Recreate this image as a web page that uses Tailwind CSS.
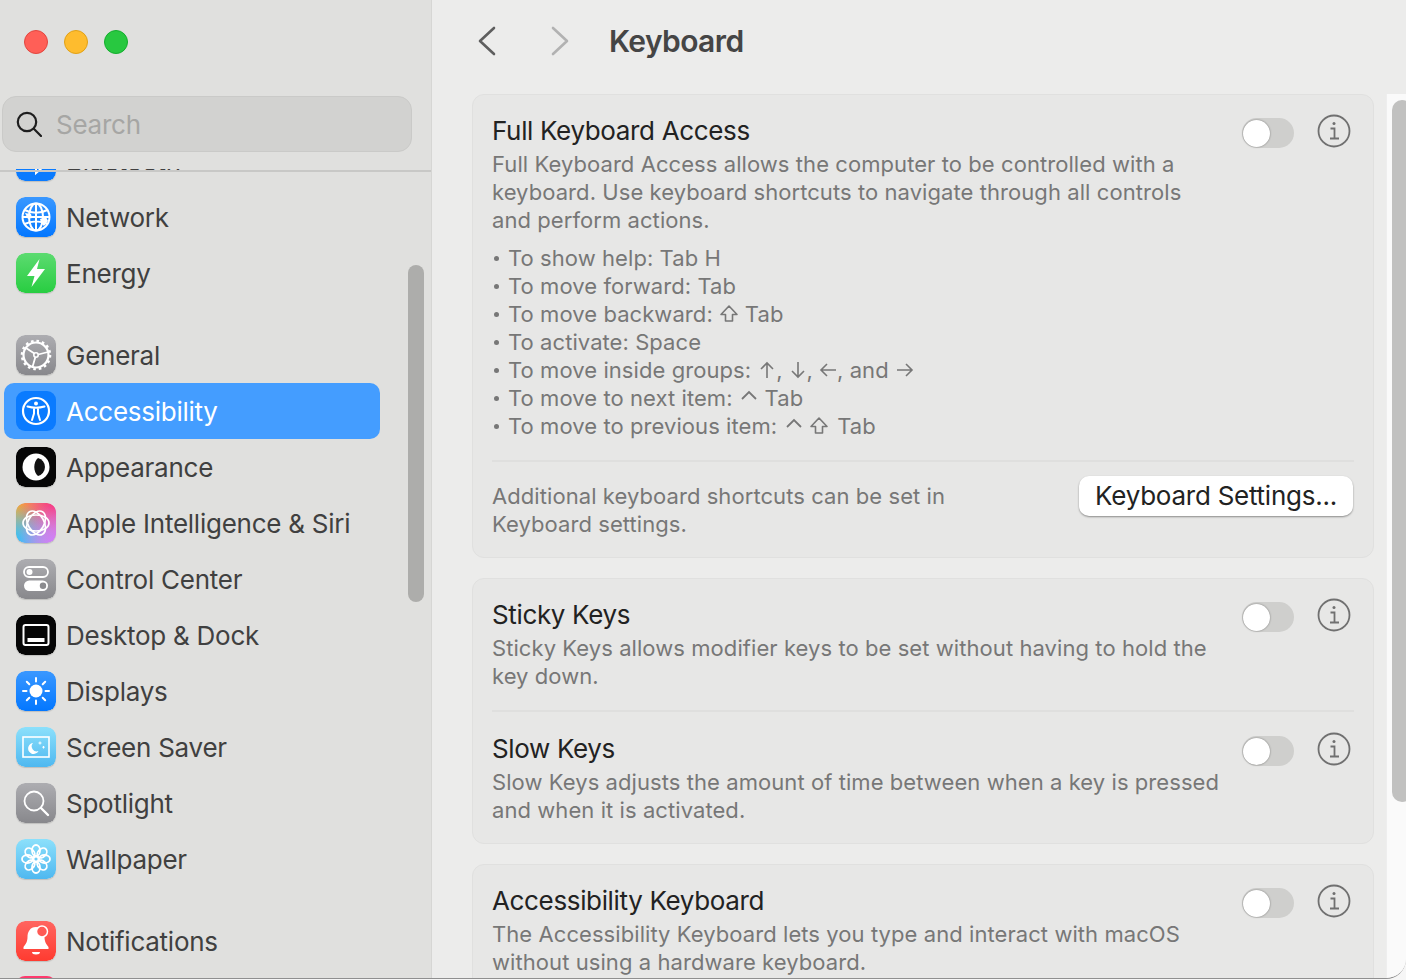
<!DOCTYPE html>
<html lang="en">
<head>
  <meta charset="UTF-8">
  <title>Keyboard</title>
  <script src="https://cdn.jsdelivr.net/npm/@tailwindcss/browser@4"></script>
</head>
<body class="h-[980px] w-[1406px] overflow-hidden bg-[#f6f6f6] font-['Inter',sans-serif]">
  <div class="flex h-[979px] overflow-hidden rounded-br-[20px] border-b border-b-[#8f8f8f] bg-[#ececeb]">

    <!-- sidebar -->
    <aside class="relative flex w-[432px] shrink-0 flex-col overflow-hidden border-r border-r-[#d6d6d4] bg-[#e0e0de]">
      <div class="relative z-10 h-[169px] shrink-0 bg-[#e0e0de]">
        <div class="flex gap-[16px] pl-[24px] pt-[30px]">
          <span class="h-[24px] w-[24px] rounded-full border border-[#e2463f] bg-[#ff5f57]"></span>
          <span class="h-[24px] w-[24px] rounded-full border border-[#e1a116] bg-[#febc2e]"></span>
          <span class="h-[24px] w-[24px] rounded-full border border-[#14ae2e] bg-[#28c840]"></span>
        </div>
        <div class="ml-[2px] mt-[42px] flex h-[56px] w-[410px] items-center rounded-[14px] border border-[#cacac8] bg-[#d2d2d0] pl-[13px]">
          <svg class="h-[26px] w-[26px]" viewBox="0 0 26 26" fill="none" stroke="#1e1e1e" stroke-width="2.2" stroke-linecap="round"><circle cx="11" cy="11" r="9.2"/><path d="M17.8 17.8 25 25"/></svg>
          <span class="ml-[14px] text-[26px] tracking-[-0.25px] text-[#a6a6a4]">Search</span>
        </div>
      </div>
      <div class="absolute left-0 top-[170px] z-20 h-[2px] w-full bg-[#c8c8c6]"></div>

      <nav class="-mt-[36px] flex flex-col text-[26px] tracking-[-0.25px] text-[#404040]">
        <a class="flex h-[56px] items-center gap-[10px] pl-[16px]">
          <svg class="h-[40px] w-[40px] rounded-[9px] shadow-[0_1px_1px_rgba(0,0,0,0.15)]" viewBox="0 0 40 40"><rect width="40" height="40" rx="9" fill="#0a7bff"/><path d="M13 14l14 12-7 6V8l7 6-14 12" fill="none" stroke="#fff" stroke-width="2"/></svg>Bluetooth
        </a>
        <a class="flex h-[56px] items-center gap-[10px] pl-[16px]">
          <svg class="h-[40px] w-[40px] rounded-[9px] shadow-[0_1px_1px_rgba(0,0,0,0.15)]" viewBox="0 0 40 40"><defs><linearGradient id="blue" x1="0" y1="0" x2="0" y2="1"><stop offset="0" stop-color="#3a98ff"/><stop offset="1" stop-color="#0377ff"/></linearGradient></defs><rect width="40" height="40" rx="9" fill="url(#blue)"/><g fill="none" stroke="#fff" stroke-width="2"><circle cx="20" cy="20" r="13.500"/><ellipse cx="20" cy="20" rx="7" ry="13.500"/><path d="M20 6.500v27M8.500 13c7 3.500 16 3.500 23 0M8.500 27c7-3.500 16-3.500 23 0M6.500 20h27"/></g><path d="M24 22l6-2 2 4-4 5-3-3zM9 16l6 1 1 4-4 1z" fill="#fff"/></svg>Network
        </a>
        <a class="flex h-[56px] items-center gap-[10px] pl-[16px]">
          <svg class="h-[40px] w-[40px] rounded-[9px] shadow-[0_1px_1px_rgba(0,0,0,0.15)]" viewBox="0 0 40 40"><defs><linearGradient id="green" x1="0" y1="0" x2="0" y2="1"><stop offset="0" stop-color="#5cdb70"/><stop offset="1" stop-color="#28cd41"/></linearGradient></defs><rect width="40" height="40" rx="9" fill="url(#green)"/><path d="M23.500 6 11 23h7.500L15.500 34 29 16h-8z" fill="#fff"/></svg>Energy
        </a>

        <a class="mt-[26px] flex h-[56px] items-center gap-[10px] pl-[16px]">
          <svg class="h-[40px] w-[40px] rounded-[9px] shadow-[0_1px_1px_rgba(0,0,0,0.15)]" viewBox="0 0 40 40"><defs><linearGradient id="gray" x1="0" y1="0" x2="0" y2="1"><stop offset="0" stop-color="#adadb1"/><stop offset="1" stop-color="#88888c"/></linearGradient></defs><rect width="40" height="40" rx="9" fill="url(#gray)"/><g fill="none" stroke="#fff"><circle cx="20" cy="20" r="12.500" stroke-width="2.200"/><circle cx="20" cy="20" r="14" stroke-width="2.600" stroke-dasharray="2.600 2.900"/><circle cx="20" cy="20" r="2.200" stroke-width="1.600"/><path d="M18.400 18.500 10 13M22.200 19.500 32 17M19.300 22.200 16.500 32" stroke-width="1.800"/></g></svg>General
        </a>
        <a class="relative ml-[4px] flex h-[56px] w-[376px] items-center gap-[10px] rounded-[10px] bg-[#449dff] pl-[12px] text-white">
          <svg class="h-[40px] w-[40px]" viewBox="0 0 40 40"><rect width="40" height="40" rx="9" fill="#0a7bff"/><circle cx="20" cy="20" r="13" fill="none" stroke="#fff" stroke-width="2.200"/><circle cx="20" cy="12.600" r="2" fill="#fff"/><path d="M11.500 15.500c5.500 1.500 11.500 1.500 17 0M18 17v5.500L16 29M22 17v5.500L24 29" fill="none" stroke="#fff" stroke-width="2" stroke-linecap="round"/></svg>Accessibility
        </a>
        <a class="flex h-[56px] items-center gap-[10px] pl-[16px]">
          <svg class="h-[40px] w-[40px] rounded-[9px] shadow-[0_1px_1px_rgba(0,0,0,0.15)]" viewBox="0 0 40 40"><rect width="40" height="40" rx="9" fill="#060606"/><circle cx="20" cy="20" r="13.500" fill="#fff"/><path d="M22 11A9.300 9.300 0 0 1 22 29C17 25 17 15 22 11z" fill="#111"/></svg>Appearance
        </a>
        <a class="flex h-[56px] items-center gap-[10px] pl-[16px]">
          <svg class="h-[40px] w-[40px] rounded-[9px] shadow-[0_1px_1px_rgba(0,0,0,0.15)]" viewBox="0 0 40 40"><defs><radialGradient id="ai1" cx="0" cy="0" r="1"><stop offset="0" stop-color="#ffae1f"/><stop offset="1" stop-color="#ffae1f" stop-opacity="0"/></radialGradient><radialGradient id="ai2" cx="1" cy="0" r="1"><stop offset="0" stop-color="#ff2d7a"/><stop offset="1" stop-color="#ff2d7a" stop-opacity="0"/></radialGradient><radialGradient id="ai3" cx="0" cy="1" r="1"><stop offset="0" stop-color="#22c6ff"/><stop offset="1" stop-color="#22c6ff" stop-opacity="0"/></radialGradient><radialGradient id="ai4" cx="1" cy="1" r="1"><stop offset="0" stop-color="#d27bff"/><stop offset="1" stop-color="#d27bff" stop-opacity="0"/></radialGradient></defs><rect width="40" height="40" rx="9" fill="#c9a5b5"/><rect width="40" height="40" rx="9" fill="url(#ai1)"/><rect width="40" height="40" rx="9" fill="url(#ai2)"/><rect width="40" height="40" rx="9" fill="url(#ai3)"/><rect width="40" height="40" rx="9" fill="url(#ai4)"/><g fill="none" stroke="#fff" stroke-width="1.700"><ellipse cx="20" cy="20" rx="13" ry="8"/><ellipse cx="20" cy="20" rx="13" ry="8" transform="rotate(60 20 20)"/><ellipse cx="20" cy="20" rx="13" ry="8" transform="rotate(120 20 20)"/></g></svg>Apple Intelligence &amp; Siri
        </a>
        <a class="flex h-[56px] items-center gap-[10px] pl-[16px]">
          <svg class="h-[40px] w-[40px] rounded-[9px] shadow-[0_1px_1px_rgba(0,0,0,0.15)]" viewBox="0 0 40 40"><rect width="40" height="40" rx="9" fill="url(#gray)"/><rect x="8" y="8" width="24" height="10" rx="5" fill="none" stroke="#fff" stroke-width="1.800"/><circle cx="13.500" cy="13" r="3" fill="#fff"/><rect x="8" y="21.500" width="24" height="10.500" rx="5.250" fill="#fff"/><circle cx="27" cy="26.750" r="3.200" fill="#8b8b8f"/></svg>Control Center
        </a>
        <a class="flex h-[56px] items-center gap-[10px] pl-[16px]">
          <svg class="h-[40px] w-[40px] rounded-[9px] shadow-[0_1px_1px_rgba(0,0,0,0.15)]" viewBox="0 0 40 40"><rect width="40" height="40" rx="9" fill="#060606"/><rect x="7.500" y="10" width="25" height="20" rx="2" fill="none" stroke="#fff" stroke-width="2"/><rect x="11.500" y="23" width="17" height="4" fill="#fff"/></svg>Desktop &amp; Dock
        </a>
        <a class="flex h-[56px] items-center gap-[10px] pl-[16px]">
          <svg class="h-[40px] w-[40px] rounded-[9px] shadow-[0_1px_1px_rgba(0,0,0,0.15)]" viewBox="0 0 40 40"><rect width="40" height="40" rx="9" fill="url(#blue)"/><circle cx="20" cy="20" r="6.500" fill="#fff"/><path d="M20 7v3.500M20 29.500V33M7 20h3.500M29.500 20H33M10.800 10.800l2.500 2.500M26.700 26.700l2.500 2.500M29.200 10.800l-2.500 2.500M13.300 26.700l-2.500 2.500" stroke="#fff" stroke-width="2" stroke-linecap="round"/></svg>Displays
        </a>
        <a class="flex h-[56px] items-center gap-[10px] pl-[16px]">
          <svg class="h-[40px] w-[40px] rounded-[9px] shadow-[0_1px_1px_rgba(0,0,0,0.15)]" viewBox="0 0 40 40"><defs><linearGradient id="sky" x1="0" y1="0" x2="0" y2="1"><stop offset="0" stop-color="#8ce0fb"/><stop offset="1" stop-color="#4fb8f0"/></linearGradient></defs><rect width="40" height="40" rx="9" fill="url(#sky)"/><rect x="7" y="10" width="26" height="20" fill="none" stroke="#fff" stroke-width="1.600"/><path d="M17 16a5.500 5.500 0 1 0 5.500 8 5 5 0 0 1-5.500-8z" fill="#fff"/><path d="M24 14.500v3M22.500 16h3M27.500 19v2.500M26.300 20.200h2.400" stroke="#fff" stroke-width="1"/></svg>Screen Saver
        </a>
        <a class="flex h-[56px] items-center gap-[10px] pl-[16px]">
          <svg class="h-[40px] w-[40px] rounded-[9px] shadow-[0_1px_1px_rgba(0,0,0,0.15)]" viewBox="0 0 40 40"><rect width="40" height="40" rx="9" fill="url(#gray)"/><circle cx="18" cy="18" r="9.500" fill="none" stroke="#fff" stroke-width="1.800"/><path d="M25 25l7 7" stroke="#fff" stroke-width="2.400" stroke-linecap="round"/></svg>Spotlight
        </a>
        <a class="flex h-[56px] items-center gap-[10px] pl-[16px]">
          <svg class="h-[40px] w-[40px] rounded-[9px] shadow-[0_1px_1px_rgba(0,0,0,0.15)]" viewBox="0 0 40 40"><rect width="40" height="40" rx="9" fill="url(#sky)"/><g fill="none" stroke="#fff" stroke-width="1.800"><circle cx="20" cy="20" r="2.500"/><ellipse cx="20" cy="11.500" rx="4" ry="5.500"/><ellipse cx="20" cy="28.500" rx="4" ry="5.500"/><ellipse cx="11.500" cy="20" rx="5.500" ry="4"/><ellipse cx="28.500" cy="20" rx="5.500" ry="4"/><ellipse cx="20" cy="11.500" rx="4" ry="5.500" transform="rotate(45 20 20)"/><ellipse cx="20" cy="28.500" rx="4" ry="5.500" transform="rotate(45 20 20)"/><ellipse cx="11.500" cy="20" rx="5.500" ry="4" transform="rotate(45 20 20)"/><ellipse cx="28.500" cy="20" rx="5.500" ry="4" transform="rotate(45 20 20)"/></g></svg>Wallpaper
        </a>

        <a class="mt-[26px] flex h-[56px] items-center gap-[10px] pl-[16px]">
          <svg class="h-[40px] w-[40px] rounded-[9px] shadow-[0_1px_1px_rgba(0,0,0,0.15)]" viewBox="0 0 40 40"><defs><linearGradient id="red" x1="0" y1="0" x2="0" y2="1"><stop offset="0" stop-color="#ff6560"/><stop offset="1" stop-color="#ff3b30"/></linearGradient></defs><rect width="40" height="40" rx="9" fill="url(#red)"/><path d="M20 6c-6 0-8.500 5-8.500 10 0 5-2 7.500-4 10v2h25v-2c-2-2.500-4-5-4-10 0-5-2.500-10-8.500-10z" fill="#fff"/><path d="M16 31h8a4 2.500 0 0 1-8 0z" fill="#fff"/><circle cx="26" cy="10.500" r="5.500" fill="#ff5a55" stroke="#fff" stroke-width="1.500"/></svg>Notifications
        </a>
        <a class="flex h-[56px] items-start gap-[10px] pl-[16px] pt-[7px]">
          <span class="h-[40px] w-[40px] rounded-[9px] bg-[#ff3a6e]"></span>
        </a>
      </nav>

      <div class="absolute left-[408px] top-[265px] h-[337px] w-[16px] rounded-full bg-[#adadab]"></div>
    </aside>

    <!-- main -->
    <main class="flex min-w-0 flex-1 flex-col">
      <header class="flex h-[94px] shrink-0 items-center pb-[12px] pl-[45px]">
        <svg class="h-[30px] w-[20px]" viewBox="0 0 20 30" fill="none" stroke="#5e5e5e" stroke-width="2.600" stroke-linecap="round" stroke-linejoin="round"><path d="M17 2 3 15l14 13"/></svg>
        <svg class="ml-[53px] h-[30px] w-[20px]" viewBox="0 0 20 30" fill="none" stroke="#b2b2b2" stroke-width="2.600" stroke-linecap="round" stroke-linejoin="round"><path d="M3 2l14 13L3 28"/></svg>
        <h1 class="ml-[39px] text-[30px] font-semibold tracking-[-0.6px] text-[#454545]">Keyboard</h1>
      </header>

      <div class="flex min-h-0 flex-1">
        <div class="flex min-w-0 flex-1 flex-col gap-[20px] overflow-hidden pl-[40px] pr-[12px] tracking-[0.07px]">

          <section class="shrink-0 rounded-[12px] border border-[#e0e0df] bg-[#e7e7e6] px-[19px] pb-[19px] pt-[22px]">
            <div class="flex justify-between">
              <div>
                <h2 class="text-[26px] leading-[28px] tracking-[-0.35px] text-[#222222]">Full Keyboard Access</h2>
                <p class="mt-[5px] text-[22px] leading-[28px] text-[#777777]">Full Keyboard Access allows the computer to be controlled with a<br>keyboard. Use keyboard shortcuts to navigate through all controls<br>and perform actions.</p>
              </div>
              <div class="flex items-start gap-[23px] pr-[3px]">
                <span class="mt-[1px] flex h-[30px] w-[52px] items-center rounded-full bg-[#cfcfcd] pl-[1px]"><span class="h-[27px] w-[27px] rounded-full bg-white shadow-[0_0_2px_rgba(0,0,0,0.45)]"></span></span>
                <svg class="-mt-[3px] h-[34px] w-[34px]" viewBox="0 0 34 34" fill="none" stroke="#707070"><circle cx="17" cy="17" r="15.500" stroke-width="1.800"/><circle cx="17" cy="9.500" r="1.500" fill="#707070" stroke="none"/><path d="M13.500 14.500H17.500V24M13 24.500h9" stroke-width="1.800"/></svg>
              </div>
            </div>
            <ul class="mt-[10px] text-[22px] leading-[28px] text-[#777777]">
              <li class="flex items-center"><span class="ml-[2px] mr-[9px] h-[5px] w-[5px] rounded-full bg-[#777777]"></span>To show help: Tab H</li>
              <li class="flex items-center"><span class="ml-[2px] mr-[9px] h-[5px] w-[5px] rounded-full bg-[#777777]"></span>To move forward: Tab</li>
              <li class="flex items-center"><span class="ml-[2px] mr-[9px] h-[5px] w-[5px] rounded-full bg-[#777777]"></span>To move backward:
                <svg class="mx-[6px] h-[20px] w-[20px]" viewBox="0 0 20 20" fill="none" stroke="#777777" stroke-width="1.600" stroke-linejoin="round"><path d="M10 2 2 10.500h4.500V17h7v-6.500H18z"/></svg>Tab</li>
              <li class="flex items-center"><span class="ml-[2px] mr-[9px] h-[5px] w-[5px] rounded-full bg-[#777777]"></span>To activate: Space</li>
              <li class="flex items-center"><span class="ml-[2px] mr-[9px] h-[5px] w-[5px] rounded-full bg-[#777777]"></span>To move inside groups:
                <svg class="ml-[7px] h-[20px] w-[18px]" viewBox="0 0 18 20" fill="none" stroke="#777777" stroke-width="1.600"><path d="M9 18V3M3 9l6-6 6 6"/></svg>,
                <svg class="ml-[6px] h-[20px] w-[18px]" viewBox="0 0 18 20" fill="none" stroke="#777777" stroke-width="1.600"><path d="M9 2v15M3 11l6 6 6-6"/></svg>,
                <svg class="ml-[6px] h-[20px] w-[18px]" viewBox="0 0 18 20" fill="none" stroke="#777777" stroke-width="1.600"><path d="M17 10H2M8 4l-6 6 6 6"/></svg>, and
                <svg class="ml-[7px] h-[20px] w-[18px]" viewBox="0 0 18 20" fill="none" stroke="#777777" stroke-width="1.600"><path d="M1 10h15M10 4l6 6-6 6"/></svg></li>
              <li class="flex items-center"><span class="ml-[2px] mr-[9px] h-[5px] w-[5px] rounded-full bg-[#777777]"></span>To move to next item:
                <svg class="ml-[7px] mr-[7px] h-[20px] w-[18px]" viewBox="0 0 18 20" fill="none" stroke="#777777" stroke-width="1.800"><path d="M2 11l7-7 7 7"/></svg>Tab</li>
              <li class="flex items-center"><span class="ml-[2px] mr-[9px] h-[5px] w-[5px] rounded-full bg-[#777777]"></span>To move to previous item:
                <svg class="ml-[8px] mr-[6px] h-[20px] w-[18px]" viewBox="0 0 18 20" fill="none" stroke="#777777" stroke-width="1.800"><path d="M2 11l7-7 7 7"/></svg>
                <svg class="mr-[8px] h-[20px] w-[20px]" viewBox="0 0 20 20" fill="none" stroke="#777777" stroke-width="1.600" stroke-linejoin="round"><path d="M10 2 2 10.500h4.500V17h7v-6.500H18z"/></svg>Tab</li>
            </ul>
            <div class="mt-[20px] flex justify-between border-t-2 border-t-[#dfdfde] pt-[20px]">
              <p class="text-[22px] leading-[28px] text-[#777777]">Additional keyboard shortcuts can be set in<br>Keyboard settings.</p>
              <button class="-mt-[6px] mr-[1px] h-[40px] w-[274px] rounded-[10px] bg-white pb-[4px] text-[26px] tracking-[-0.25px] text-[#222222] shadow-[0_1px_2px_rgba(0,0,0,0.4)]">Keyboard Settings...</button>
            </div>
          </section>

          <section class="shrink-0 rounded-[12px] border border-[#e0e0df] bg-[#e7e7e6] px-[19px] pb-[19px] pt-[22px]">
            <div class="flex justify-between border-b-2 border-b-[#dfdfde] pb-[20px]">
              <div>
                <h2 class="text-[26px] leading-[28px] tracking-[-0.35px] text-[#222222]">Sticky Keys</h2>
                <p class="mt-[5px] text-[22px] leading-[28px] text-[#777777]">Sticky Keys allows modifier keys to be set without having to hold the<br>key down.</p>
              </div>
              <div class="flex items-start gap-[23px] pr-[3px]">
                <span class="mt-[1px] flex h-[30px] w-[52px] items-center rounded-full bg-[#cfcfcd] pl-[1px]"><span class="h-[27px] w-[27px] rounded-full bg-white shadow-[0_0_2px_rgba(0,0,0,0.45)]"></span></span>
                <svg class="-mt-[3px] h-[34px] w-[34px]" viewBox="0 0 34 34" fill="none" stroke="#707070"><circle cx="17" cy="17" r="15.500" stroke-width="1.800"/><circle cx="17" cy="9.500" r="1.500" fill="#707070" stroke="none"/><path d="M13.500 14.500H17.500V24M13 24.500h9" stroke-width="1.800"/></svg>
              </div>
            </div>
            <div class="mt-[23px] flex justify-between">
              <div>
                <h2 class="text-[26px] leading-[28px] tracking-[-0.35px] text-[#222222]">Slow Keys</h2>
                <p class="mt-[5px] text-[22px] leading-[28px] text-[#777777]">Slow Keys adjusts the amount of time between when a key is pressed<br>and when it is activated.</p>
              </div>
              <div class="flex items-start gap-[23px] pr-[3px]">
                <span class="mt-[1px] flex h-[30px] w-[52px] items-center rounded-full bg-[#cfcfcd] pl-[1px]"><span class="h-[27px] w-[27px] rounded-full bg-white shadow-[0_0_2px_rgba(0,0,0,0.45)]"></span></span>
                <svg class="-mt-[3px] h-[34px] w-[34px]" viewBox="0 0 34 34" fill="none" stroke="#707070"><circle cx="17" cy="17" r="15.500" stroke-width="1.800"/><circle cx="17" cy="9.500" r="1.500" fill="#707070" stroke="none"/><path d="M13.500 14.500H17.500V24M13 24.500h9" stroke-width="1.800"/></svg>
              </div>
            </div>
          </section>

          <section class="shrink-0 rounded-[12px] border border-[#e0e0df] bg-[#e7e7e6] px-[19px] pb-[20px] pt-[22px]">
            <div class="flex justify-between">
              <div>
                <h2 class="text-[26px] leading-[28px] tracking-[-0.35px] text-[#222222]">Accessibility Keyboard</h2>
                <p class="mt-[5px] text-[22px] leading-[28px] text-[#777777]">The Accessibility Keyboard lets you type and interact with macOS<br>without using a hardware keyboard.</p>
              </div>
              <div class="flex items-start gap-[23px] pr-[3px]">
                <span class="mt-[1px] flex h-[30px] w-[52px] items-center rounded-full bg-[#cfcfcd] pl-[1px]"><span class="h-[27px] w-[27px] rounded-full bg-white shadow-[0_0_2px_rgba(0,0,0,0.45)]"></span></span>
                <svg class="-mt-[3px] h-[34px] w-[34px]" viewBox="0 0 34 34" fill="none" stroke="#707070"><circle cx="17" cy="17" r="15.500" stroke-width="1.800"/><circle cx="17" cy="9.500" r="1.500" fill="#707070" stroke="none"/><path d="M13.500 14.500H17.500V24M13 24.500h9" stroke-width="1.800"/></svg>
              </div>
            </div>
          </section>
        </div>

        <div class="w-[20px] shrink-0 overflow-hidden border-l border-l-[#eeeeee] bg-[#fafafa] pl-[5px] pt-[6px]">
          <div class="h-[702px] w-[20px] rounded-full bg-[#c1c1c0]"></div>
        </div>
      </div>
    </main>
  </div>
</body>
</html>
